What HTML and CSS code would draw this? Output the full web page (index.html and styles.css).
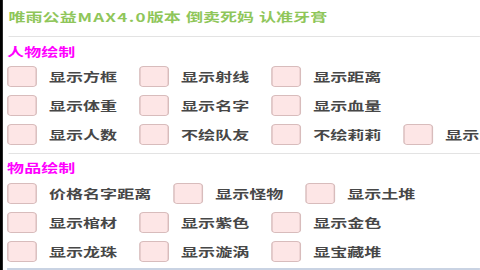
FILE: index.html
```html
<!DOCTYPE html>
<html lang="zh-CN">
<head>
<meta charset="utf-8">
<title>唯雨公益MAX4.0</title>
<link rel="stylesheet" href="styles.css">
</head>
<body>
<div class="screen">
  <div class="edge"></div>
  <div class="content">
    <div class="title">唯雨公益<span class="latin">MAX4.0</span>版本<span class="sp"></span>倒卖死妈<span class="sp"></span>认准牙膏</div>
    <div class="divider"></div>
    <div class="section">人物绘制</div>
    <div class="rows">
      <div class="row">
        <label class="item"><span class="box"></span><span class="txt">显示方框</span></label>
        <label class="item"><span class="box"></span><span class="txt">显示射线</span></label>
        <label class="item"><span class="box"></span><span class="txt">显示距离</span></label>
      </div>
      <div class="row">
        <label class="item"><span class="box"></span><span class="txt">显示体重</span></label>
        <label class="item"><span class="box"></span><span class="txt">显示名字</span></label>
        <label class="item"><span class="box"></span><span class="txt">显示血量</span></label>
      </div>
      <div class="row">
        <label class="item"><span class="box"></span><span class="txt">显示人数</span></label>
        <label class="item"><span class="box"></span><span class="txt">不绘队友</span></label>
        <label class="item"><span class="box"></span><span class="txt">不绘莉莉</span></label>
        <label class="item"><span class="box"></span><span class="txt">显示骨骼</span></label>
      </div>
    </div>
    <div class="divider second"></div>
    <div class="section">物品绘制</div>
    <div class="rows items">
      <div class="row">
        <label class="item"><span class="box"></span><span class="txt">价格名字距离</span></label>
        <label class="item"><span class="box"></span><span class="txt">显示怪物</span></label>
        <label class="item"><span class="box"></span><span class="txt">显示土堆</span></label>
      </div>
      <div class="row">
        <label class="item"><span class="box"></span><span class="txt">显示棺材</span></label>
        <label class="item"><span class="box"></span><span class="txt">显示紫色</span></label>
        <label class="item"><span class="box"></span><span class="txt">显示金色</span></label>
      </div>
      <div class="row">
        <label class="item"><span class="box"></span><span class="txt">显示龙珠</span></label>
        <label class="item"><span class="box"></span><span class="txt">显示漩涡</span></label>
        <label class="item"><span class="box"></span><span class="txt">显宝藏堆</span></label>
      </div>
    </div>
    <div class="bottom-bar"></div>
  </div>
</div>
</body>
</html>
```

FILE: styles.css
```css
html, body {
  margin: 0;
  padding: 0;
  background: #ffffff;
  overflow: hidden;
}

body {
  width: 480px;
  height: 270px;
  font-family: "Noto Sans CJK SC", "Noto Sans", sans-serif;
}

.screen {
  width: 338px;
  height: 270px;
  display: flex;
  transform: scaleX(1.42);
  transform-origin: 0 0;
  overflow: hidden;
}

.edge {
  width: 2px;
  flex: none;
  background: #000000;
}

.content {
  flex: 1;
  min-width: 0;
  display: flex;
  flex-direction: column;
  padding-left: 3px;
  overflow: hidden;
}

.title {
  margin-top: 7px;
  height: 20px;
  line-height: 20px;
  font-size: 12px;
  font-weight: 700;
  color: #8fc65a;
  white-space: nowrap;
  padding-left: 1px;
}

.title .latin {
  letter-spacing: 0.9px;
  margin-left: 0.5px;
}

.title .sp {
  display: inline-block;
  width: 3.5px;
}

.divider {
  margin-top: 9px;
  height: 1px;
  background: #e3e3e3;
  margin-left: 1px;
}

.divider.second {
  margin-top: 8px;
}

.section {
  margin-top: 7px;
  height: 16px;
  line-height: 16px;
  font-size: 12px;
  font-weight: 700;
  color: #ff00ff;
  white-space: nowrap;
}

.divider.second + .section {
  margin-top: 6px;
}

.rows {
  margin-top: 6px;
  display: flex;
  flex-direction: column;
  gap: 8px;
}

.rows.items {
  margin-top: 7px;
}

.row {
  display: flex;
  gap: 15.5px;
  height: 21px;
  white-space: nowrap;
}

.item {
  display: flex;
  align-items: center;
  gap: 8.5px;
  flex: none;
}

.box {
  width: 21px;
  height: 21px;
  box-sizing: border-box;
  border: 1px solid #d8bcbc;
  border-radius: 3px;
  background: #fde6e6;
  flex: none;
}

.txt {
  font-size: 12px;
  font-weight: 700;
  color: #474747;
  line-height: 21px;
}

.bottom-bar {
  margin-top: auto;
  height: 2px;
  background: #c9d3e3;
}
```
